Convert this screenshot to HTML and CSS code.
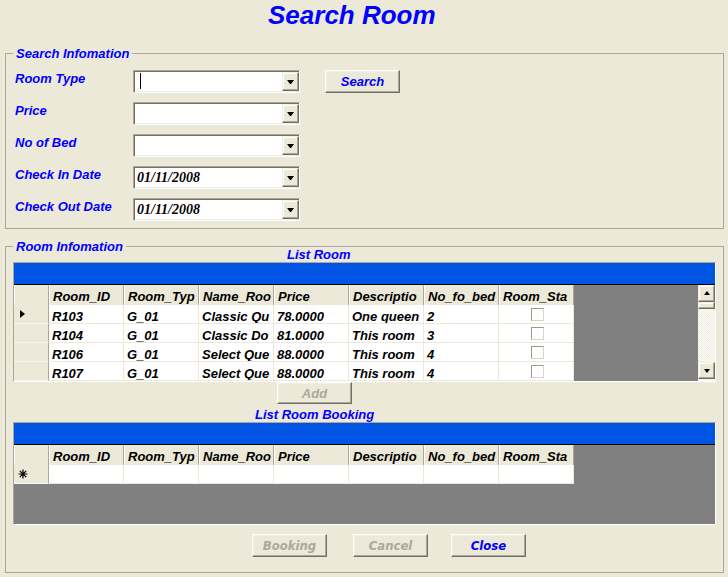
FILE: index.html
```html
<!DOCTYPE html>
<html>
<head>
<meta charset="utf-8">
<title>Search Room</title>
<link rel="stylesheet" href="styles.css">
</head>
<body>
<div class="title">Search Room</div>

<fieldset class="group g1">
  <legend>Search Infomation</legend>
  <div class="form">
    <div class="row">
      <label>Room Type</label>
      <div class="combo"><div class="field"><span class="caret"></span></div><div class="dd"></div></div>
      <button class="btn search">Search</button>
    </div>
    <div class="row">
      <label>Price</label>
      <div class="combo"><div class="field"></div><div class="dd"></div></div>
    </div>
    <div class="row">
      <label>No of Bed</label>
      <div class="combo"><div class="field"></div><div class="dd"></div></div>
    </div>
    <div class="row">
      <label>Check In Date</label>
      <div class="combo"><div class="field">01/11/2008</div><div class="dd"></div></div>
    </div>
    <div class="row">
      <label>Check Out Date</label>
      <div class="combo"><div class="field">01/11/2008</div><div class="dd"></div></div>
    </div>
  </div>
</fieldset>

<fieldset class="group g2">
  <legend>Room Infomation</legend>
  <div class="caption c1">List Room</div>
  <div class="grid">
    <div class="band"></div>
    <div class="gbody gb1">
      <div class="table">
        <div class="hc rhh"></div>
        <div class="hc">Room_ID</div>
        <div class="hc">Room_Typ</div>
        <div class="hc">Name_Roo</div>
        <div class="hc">Price</div>
        <div class="hc">Descriptio</div>
        <div class="hc">No_fo_bed</div>
        <div class="hc">Room_Sta</div>

        <div class="rh"><span class="ptr"></span></div>
        <div class="dc">R103</div><div class="dc">G_01</div><div class="dc">Classic Qu</div><div class="dc">78.0000</div><div class="dc">One queen</div><div class="dc">2</div><div class="dc cb"><span class="chk"></span></div>

        <div class="rh"></div>
        <div class="dc">R104</div><div class="dc">G_01</div><div class="dc">Classic Do</div><div class="dc">81.0000</div><div class="dc">This room</div><div class="dc">3</div><div class="dc cb"><span class="chk"></span></div>

        <div class="rh"></div>
        <div class="dc">R106</div><div class="dc">G_01</div><div class="dc">Select Que</div><div class="dc">88.0000</div><div class="dc">This room</div><div class="dc">4</div><div class="dc cb"><span class="chk"></span></div>

        <div class="rh"></div>
        <div class="dc">R107</div><div class="dc">G_01</div><div class="dc">Select Que</div><div class="dc">88.0000</div><div class="dc">This room</div><div class="dc">4</div><div class="dc cb"><span class="chk"></span></div>
      </div>
      <div class="gfill"></div>
      <div class="vscroll">
        <div class="sbtn"><span class="up"></span></div>
        <div class="thumb"></div>
        <div class="track"></div>
        <div class="sbtn"><span class="down"></span></div>
        <div class="tail"></div>
      </div>
    </div>
  </div>

  <div class="addrow"><button class="btn dis add">Add</button></div>

  <div class="caption c2">List Room Booking</div>
  <div class="grid">
    <div class="band"></div>
    <div class="gbody gb2">
      <div class="table">
        <div class="hc rhh"></div>
        <div class="hc">Room_ID</div>
        <div class="hc">Room_Typ</div>
        <div class="hc">Name_Roo</div>
        <div class="hc">Price</div>
        <div class="hc">Descriptio</div>
        <div class="hc">No_fo_bed</div>
        <div class="hc">Room_Sta</div>

        <div class="rh star"><svg width="10" height="10" viewBox="0 0 10 10"><path d="M5 0.5V9.5M0.5 5H9.5M1.8 1.8L8.2 8.2M8.2 1.8L1.8 8.2" stroke="#000" stroke-width="1.2" fill="none"/></svg></div>
        <div class="dc"></div><div class="dc"></div><div class="dc"></div><div class="dc"></div><div class="dc"></div><div class="dc"></div><div class="dc"></div>
      </div>
      <div class="gfill"></div>
    </div>
  </div>

  <div class="actions">
    <button class="btn narrow dis">Booking</button>
    <button class="btn narrow dis cancel">Cancel</button>
    <button class="btn narrow close">Close</button>
  </div>
</fieldset>
</body>
</html>
```

FILE: styles.css
```css
* { box-sizing: border-box; }

body {
  margin: 0;
  width: 728px;
  height: 577px;
  overflow: hidden;
  background: #ECE9D8;
  font-family: "Liberation Sans", Arial, sans-serif;
  font-weight: bold;
  font-style: italic;
  font-size: 13px;
  color: #000;
}

.title {
  height: 30px;
  line-height: 30px;
  font-size: 26px;
  color: #0000FF;
  padding-left: 268px;
}

.group {
  width: 719px;
  margin: 0 4px 0 5px;
  padding: 0;
  border: 1px solid #ACA899;
  min-width: 0;
}

.group legend {
  margin-left: 7px;
  padding: 0 3px;
  line-height: 15px;
  color: #0000FF;
}

.g1 { margin-top: 16px; padding-bottom: 7px; }
.g2 { margin-top: 10px; padding-bottom: 15px; }

.form {
  display: flex;
  flex-direction: column;
  gap: 9px;
  padding: 9px 0 0 9px;
}

.row {
  display: flex;
  align-items: flex-start;
  height: 23px;
}

.row label {
  width: 118px;
  line-height: 15px;
  padding-top: 1px;
  color: #0000FF;
}

.combo {
  display: flex;
  width: 167px;
  height: 23px;
  padding: 1px 0 1px 1px;
  background: #fff;
  border: 1px solid;
  border-color: #ACA899 #fff #fff #ACA899;
  box-shadow: inset 1px 1px #716F64, inset -1px -1px #F1EFE2;
}

.field {
  flex: 1;
  padding-left: 2px;
  font-family: "Liberation Serif", "Times New Roman", serif;
  font-size: 14px;
  line-height: 19px;
  white-space: nowrap;
  overflow: hidden;
}

.caret {
  display: block;
  width: 1px;
  height: 16px;
  margin: 1px 0 0 3px;
  background: #000;
}

.dd {
  width: 17px;
  height: 19px;
  display: flex;
  align-items: center;
  justify-content: center;
  background: #ECE9D8;
  border: 1px solid;
  border-color: #F1EFE2 #716F64 #716F64 #F1EFE2;
  box-shadow: inset -1px -1px #ACA899, inset 1px 1px #fff;
}

.dd::after {
  content: "";
  width: 1px;
  height: 0;
  border-top: 4px solid #000;
  border-left: 3px solid transparent;
  border-right: 3px solid transparent;
  margin-top: 1px;
}

.btn {
  width: 75px;
  height: 23px;
  padding: 0;
  margin: 0;
  background: #ECE9D8;
  border: 1px solid;
  border-color: #fff #716F64 #716F64 #fff;
  box-shadow: inset -1px -1px #ACA899, inset 1px 1px #F1EFE2;
  font: inherit;
  line-height: 15px;
  color: #0000FF;
  text-align: center;
}

.btn.dis { color: #ACA899; }

.search { margin-left: 25px; }

.caption {
  line-height: 15px;
  color: #0000FF;
}
.c1 { margin-top: -7px; padding-left: 281px; }
.c2 { margin-top: 3px; padding-left: 249px; }

.grid {
  width: 703px;
  margin-left: 7px;
  background: #808080;
  border: 1px solid;
  border-color: #ACA899 #fff #fff #ACA899;
}

.band {
  height: 22px;
  background: #0055E5;
  border-bottom: 1px solid #000;
}

.gbody { display: flex; }
.gb1 { height: 96px; }
.gb2 { height: 79px; }

.table {
  display: grid;
  grid-template-columns: 35px repeat(7, 75px);
  grid-template-rows: 20px;
  grid-auto-rows: 19px;
  align-content: start;
}

.hc {
  background: #ECE9D8;
  border-right: 1px solid #ACA899;
  box-shadow: inset 1px 0 #fff;
  padding: 4px 0 0 4px;
  line-height: 15px;
  white-space: nowrap;
  overflow: hidden;
}

.rh {
  background: #ECE9D8;
  border-right: 1px solid #ACA899;
  border-bottom: 1px solid #F7F6F0;
  padding: 5px 0 0 6px;
}

.ptr {
  display: block;
  width: 0;
  height: 0;
  border-left: 5px solid #000;
  border-top: 4.5px solid transparent;
  border-bottom: 4.5px solid transparent;
}

.rh.star { padding: 4px 0 0 4px; }
.rh.star svg { display: block; }

.dc {
  background: #fff;
  border-right: 1px solid #ECE9D8;
  border-bottom: 1px solid #ECE9D8;
  padding: 4px 0 0 3px;
  line-height: 15px;
  white-space: nowrap;
  overflow: hidden;
}

.dc.cb {
  display: flex;
  justify-content: center;
  padding: 3px 0 0 2px;
}

.chk {
  width: 13px;
  height: 13px;
  background: #fff;
  border: 1px solid;
  border-color: #9A9890 #D8D5C8 #D8D5C8 #9A9890;
}

.gfill { flex: 1; }

.vscroll {
  width: 17px;
  display: flex;
  flex-direction: column;
}

.sbtn, .thumb {
  background: #ECE9D8;
  border: 1px solid;
  border-color: #F1EFE2 #716F64 #716F64 #F1EFE2;
  box-shadow: inset -1px -1px #ACA899, inset 1px 1px #fff;
}

.sbtn {
  height: 17px;
  display: flex;
  align-items: center;
  justify-content: center;
}

.thumb { height: 7px; }

.track, .tail {
  background: repeating-conic-gradient(#ECE9D8 0 25%, #fff 0 50%) 0 0 / 2px 2px;
}
.track { flex: 1; }
.tail { height: 2px; }

.up, .down {
  width: 1px;
  height: 0;
  border-left: 3px solid transparent;
  border-right: 3px solid transparent;
}
.up { border-bottom: 4px solid #000; margin-top: -1px; }
.down { border-top: 4px solid #000; }

.addrow {
  height: 22px;
  padding-left: 271px;
}
.btn.add { height: 22px; }

.actions {
  display: flex;
  margin-top: 9px;
  padding-left: 246px;
}

.btn.narrow {
  font-family: "DejaVu Sans Condensed", "Liberation Sans", sans-serif;
  font-size: 13px;
  line-height: 17px;
}

.cancel { margin-left: 26px; }
.close { margin-left: 23px; }
```
